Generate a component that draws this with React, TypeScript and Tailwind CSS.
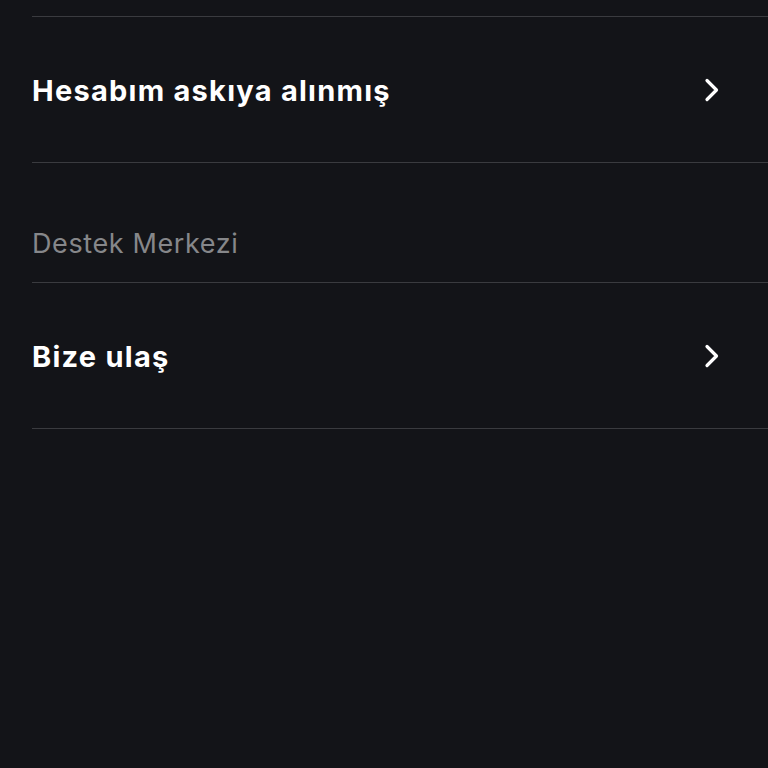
import { ReactNode } from "react";

const Chevron = () => (
  <svg width="16" height="24" viewBox="0 0 16 24" fill="none" className="shrink-0">
    <path d="M3 2.5 12.5 12 3 21.5" stroke="#ffffff" strokeWidth="3.2" strokeLinecap="round" strokeLinejoin="round" />
  </svg>
);

const Row = ({ children }: { children: ReactNode }) => (
  <div className="flex h-[146px] items-center justify-between border-b border-[#3a3b3f] pr-[48px]">
    <span className="pt-[3px] text-[29px] font-bold tracking-[1.25px] text-white">{children}</span>
    <Chevron />
  </div>
);

export default function App() {
  return (
    <div className="min-h-[768px] w-[768px] bg-[#131418] pl-[32px] font-['Inter',sans-serif]">
      <div className="h-[17px] border-b border-[#3a3b3f]" />
      <Row>Hesabım askıya alınmış</Row>
      <div className="flex h-[120px] items-center border-b border-[#3a3b3f] pt-[44px]">
        <span className="text-[27px] tracking-[0.6px] text-[#86878a]">Destek Merkezi</span>
      </div>
      <Row>Bize ulaş</Row>
    </div>
  );
}
